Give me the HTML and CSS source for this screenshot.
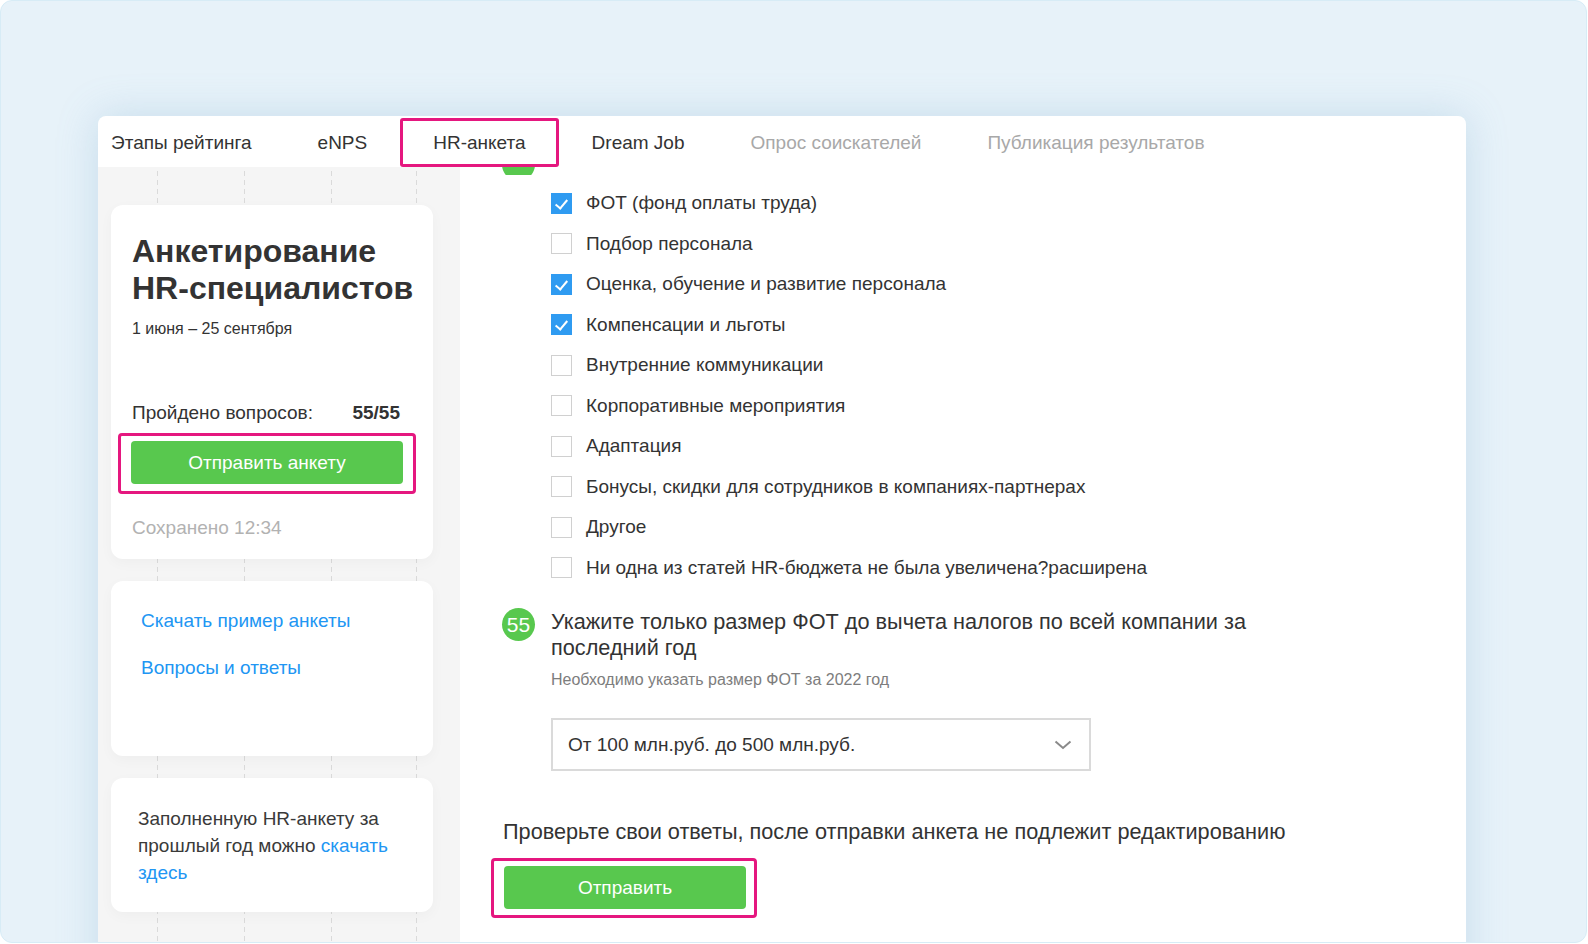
FILE: index.html
```html
<!DOCTYPE html>
<html lang="ru">
<head>
    <meta charset="UTF-8">
    <meta name="viewport" content="width=device-width, initial-scale=1.0">
    <title>HR-анкета</title>
    <link rel="stylesheet" href="styles.css">
</head>
<body>
    <div class="frame">
        <div class="card">
            <div class="tabs">
                <div class="tab">Этапы рейтинга</div>
                <div class="tab">eNPS</div>
                <div class="tab active">HR-анкета</div>
                <div class="tab">Dream Job</div>
                <div class="tab muted">Опрос соискателей</div>
                <div class="tab muted">Публикация результатов</div>
            </div>

            <div class="content">
                <aside class="sidebar">
                    <div class="box summary">
                        <h1>Анкетирование HR-специалистов</h1>
                        <div class="dates">1 июня – 25 сентября</div>
                        <div class="progress-row">
                            <span>Пройдено вопросов:</span>
                            <b>55/55</b>
                        </div>
                        <div class="highlight">
                            <button class="btn btn-wide">Отправить анкету</button>
                        </div>
                        <div class="saved">Сохранено 12:34</div>
                    </div>

                    <div class="box links">
                        <a href="#">Скачать пример анкеты</a>
                        <a href="#">Вопросы и ответы</a>
                    </div>

                    <div class="box note">
                        Заполненную HR-анкету за прошлый год можно <a href="#">скачать</a> <a href="#">здесь</a>
                    </div>
                </aside>

                <main class="form">
                    <div class="peek"><span class="num"></span></div>

                    <ul class="options">
                        <li><span class="check on"></span>ФОТ (фонд оплаты труда)</li>
                        <li><span class="check"></span>Подбор персонала</li>
                        <li><span class="check on"></span>Оценка, обучение и развитие персонала</li>
                        <li><span class="check on"></span>Компенсации и льготы</li>
                        <li><span class="check"></span>Внутренние коммуникации</li>
                        <li><span class="check"></span>Корпоративные мероприятия</li>
                        <li><span class="check"></span>Адаптация</li>
                        <li><span class="check"></span>Бонусы, скидки для сотрудников в компаниях-партнерах</li>
                        <li><span class="check"></span>Другое</li>
                        <li><span class="check"></span>Ни одна из статей HR-бюджета не была увеличена?расширена</li>
                    </ul>

                    <div class="question">
                        <span class="num">55</span>
                        <div class="question-body">
                            <div class="question-title">Укажите только размер ФОТ до вычета налогов по всей компании за последний год</div>
                            <div class="hint">Необходимо указать размер ФОТ за 2022 год</div>
                            <div class="select">
                                <span>От 100 млн.руб. до 500 млн.руб.</span>
                                <svg width="18" height="10" viewBox="0 0 18 10"><path d="M1.5 1.5 L9 8 L16.5 1.5" fill="none" stroke="#8a8a8a" stroke-width="2"/></svg>
                            </div>
                        </div>
                    </div>

                    <p class="final">Проверьте свои ответы, после отправки анкета не подлежит редактированию</p>
                    <div class="highlight submit">
                        <button class="btn">Отправить</button>
                    </div>
                </main>
            </div>
        </div>
    </div>
</body>
</html>
```

FILE: styles.css
```css
:root {
    --green: #58c84e;
    --pink: #e5177f;
    --blue: #2196f3;
    --check-blue: #2f9bf1;
    --text: #333333;
    --muted: #a8a8a8;
}
* {
    box-sizing: border-box;
}
body {
    margin: 0;
    background: #ffffff;
    font-family: 'Liberation Sans', Arial, Helvetica, sans-serif;
    color: var(--text);
}
.frame {
    width: 1587px;
    height: 943px;
    background: #e7f2f9;
    border: 1px solid #d7ecf6;
    border-radius: 12px;
    overflow: hidden;
    padding: 115px 0 0 97px;
}
.card {
    width: 1368px;
    height: 900px;
    background: #ffffff;
    border-radius: 8px 8px 0 0;
    box-shadow: 0 0 40px rgba(110, 165, 205, 0.28);
    overflow: hidden;
}

/* tabs */
.tabs {
    display: flex;
    height: 51px;
    padding-top: 2px;
    margin-left: -20px;
    font-size: 19px;
}
.tab {
    padding: 1px 33px 0;
    line-height: 47px;
    white-space: nowrap;
}
.tab.active {
    box-shadow: inset 0 0 0 3px var(--pink);
    border-radius: 3px;
}
.tab.muted {
    color: var(--muted);
}

.content {
    display: flex;
    height: 100%;
}

/* sidebar */
.sidebar {
    width: 362px;
    flex-shrink: 0;
    padding: 38px 27px 0 13px;
    background-color: #f5f5f5;
    background-image:
        linear-gradient(to bottom, #f5f5f5 50%, transparent 50%),
        linear-gradient(to right, transparent 59px, #dadada 59px, #dadada 60px, transparent 60px,
            transparent 146px, #dadada 146px, #dadada 147px, transparent 147px,
            transparent 233px, #dadada 233px, #dadada 234px, transparent 234px,
            transparent 318px, #dadada 318px, #dadada 319px, transparent 319px);
    background-size: 100% 9px, 100% 100%;
    display: flex;
    flex-direction: column;
    gap: 22px;
}
.box {
    background: #ffffff;
    border-radius: 12px;
    box-shadow: 0 4px 14px rgba(0, 0, 0, 0.03);
}
.summary {
    height: 354px;
    padding: 28px 17px 0 7px;
}
.summary h1 {
    margin: 0 0 0 14px;
    font-size: 32px;
    line-height: 37px;
    font-weight: bold;
    color: #333333;
}
.dates {
    margin: 12px 0 0 14px;
    font-size: 16px;
    line-height: 20px;
}
.progress-row {
    display: flex;
    justify-content: space-between;
    margin: 63px 16px 0 14px;
    font-size: 19px;
    line-height: 22px;
}
.progress-row b {
    font-weight: bold;
}
.highlight {
    border: 3px solid var(--pink);
    border-radius: 4px;
    padding: 5px 10px 7px;
    margin-top: 9px;
}
.btn {
    display: block;
    width: 100%;
    height: 43px;
    border: none;
    border-radius: 4px;
    background: var(--green);
    color: #ffffff;
    font-family: inherit;
    font-size: 19px;
    cursor: pointer;
}
.saved {
    margin: 23px 0 0 14px;
    font-size: 19px;
    line-height: 22px;
    color: #b2b2b2;
}
.links {
    height: 175px;
    padding: 29px 30px 0;
    display: flex;
    flex-direction: column;
    gap: 25px;
}
.links a, .note a {
    color: var(--blue);
    text-decoration: none;
}
.links a {
    font-size: 19px;
    line-height: 22px;
}
.note {
    height: 134px;
    padding: 27px 26px 0 27px;
    font-size: 19px;
    line-height: 27px;
    color: #3a3a3a;
}

/* form */
.form {
    flex: 1;
    padding-left: 42px;
}
.num {
    display: inline-flex;
    align-items: center;
    justify-content: center;
    width: 33px;
    height: 33px;
    flex-shrink: 0;
    border-radius: 50%;
    background: var(--green);
    color: #ffffff;
    font-size: 21px;
}
.peek {
    height: 8px;
    overflow: hidden;
}
.peek .num {
    margin-top: -25px;
}
.options {
    list-style: none;
    margin: 8px 0 0;
    padding: 0 0 0 49px;
}
.options li {
    display: flex;
    align-items: center;
    height: 40.5px;
    font-size: 19px;
}
.check {
    width: 21px;
    height: 21px;
    margin-right: 14px;
    border: 1px solid #d0d0d0;
    background: #ffffff;
    position: relative;
}
.check.on {
    border-color: var(--check-blue);
    background: var(--check-blue);
}
.check.on::after {
    content: '';
    position: absolute;
    left: 6px;
    top: 3px;
    width: 5px;
    height: 10px;
    border: solid #ffffff;
    border-width: 0 2px 2px 0;
    transform: rotate(40deg);
}
.question {
    display: flex;
    gap: 16px;
    margin-top: 21px;
}
.question .num {
    margin-top: -1px;
}
.question-title {
    max-width: 740px;
    font-size: 21.7px;
    line-height: 26px;
}
.hint {
    margin-top: 9px;
    font-size: 16px;
    line-height: 20px;
    color: #7d7d7d;
}
.select {
    display: flex;
    align-items: center;
    justify-content: space-between;
    width: 540px;
    height: 53px;
    margin-top: 28px;
    padding: 0 17px 0 15px;
    border: 2px solid #dadada;
    font-size: 19px;
}
.final {
    margin: 48px 0 0 1px;
    font-size: 21.7px;
    line-height: 26px;
}
.highlight.submit {
    width: 266px;
    margin: 13px 0 0 -11px;
    padding: 5px 10px 6px;
}
.submit .btn {
    width: 242px;
}
```
